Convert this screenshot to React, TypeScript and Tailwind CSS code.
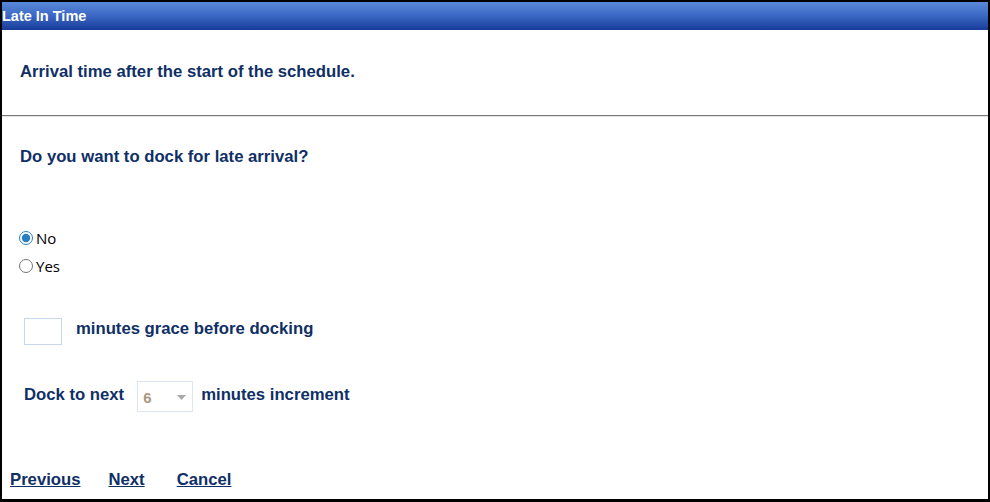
import React, { useState } from 'react';

export default function App() {
  const [dock, setDock] = useState('no');
  const [grace, setGrace] = useState('');

  return (
    <div className="w-[990px] h-[502px] bg-white border-2 border-b-[3px] border-black flex flex-col overflow-hidden font-['Liberation_Sans',Arial,sans-serif] text-[#0f2f66]">
      <div className="h-[28px] shrink-0 bg-gradient-to-b from-[#5b89d8] via-[#3b67c4] to-[#173c98] flex items-center">
        <span className="text-white font-bold text-[14.5px] leading-none">Late In Time</span>
      </div>

      <div className="h-[85px] shrink-0 flex items-center pl-[18px] pb-[1px]">
        <h1 className="font-bold text-[16.7px] leading-[20px]">Arrival time after the start of the schedule.</h1>
      </div>
      <div className="h-px bg-[#777777] shrink-0" />
      <div className="h-px bg-[#e6e6e6] shrink-0" />

      <div className="flex-1 flex flex-col">
        <p className="font-bold text-[16.7px] mt-[30px] ml-[18px] leading-[20px]">Do you want to dock for late arrival?</p>

        <div className="mt-[62px] ml-[17px] flex flex-col gap-[10px] font-['Open_Sans',sans-serif] text-[15px] text-black">
          <label className="flex items-center gap-[3px] h-[18px]">
            <input type="radio" name="dock" checked={dock === 'no'} onChange={() => setDock('no')} className="w-[14px] h-[14px] m-0 accent-[#2a7fc0]" />
            No
          </label>
          <label className="flex items-center gap-[3px] h-[18px]">
            <input type="radio" name="dock" checked={dock === 'yes'} onChange={() => setDock('yes')} className="w-[14px] h-[14px] m-0 accent-[#2a7fc0]" />
            Yes
          </label>
        </div>

        <div className="mt-[43px] ml-[22px] flex items-center gap-[14px]">
          <input
            value={grace}
            onChange={(e) => setGrace(e.target.value)}
            className="w-[38px] h-[27px] border border-[#c9d5ec] outline-none px-1 text-[14px]"
          />
          <span className="font-bold text-[16.7px] leading-[20px] -mt-[6px]">minutes grace before docking</span>
        </div>

        <div className="mt-[36px] ml-[22px] flex items-center">
          <span className="font-bold text-[16.7px] leading-[20px] -mt-[4px]">Dock to next</span>
          <div className="ml-[13px] w-[56px] h-[31px] border border-[#dde5f3] flex items-center justify-between pl-[5px] pr-[6px]">
            <span className="text-[15px] font-bold text-[#a9997f] mt-[3px]">6</span>
            <svg width="9" height="5" viewBox="0 0 9 5" className="mt-[1px]">
              <path d="M0 0 H9 L4.5 5 Z" fill="#a8a8a8" />
            </svg>
          </div>
          <span className="ml-[8px] font-bold text-[16.7px] leading-[20px] -mt-[4px]">minutes increment</span>
        </div>

        <div className="mt-auto mb-[9px] ml-[8px] flex items-center gap-[28px] text-[16.7px] leading-[20px] font-bold">
          <a href="#" className="underline">Previous</a>
          <a href="#" className="underline">Next</a>
          <a href="#" className="underline ml-[4px]">Cancel</a>
        </div>
      </div>
    </div>
  );
}
